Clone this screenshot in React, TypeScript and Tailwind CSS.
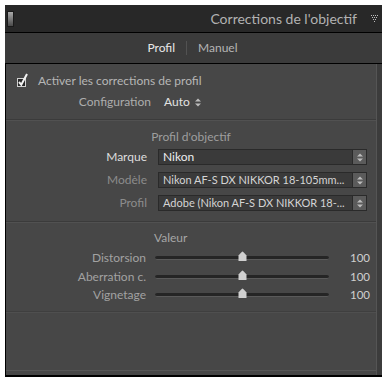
import React from "react";

const font = { fontFamily: 'Lato, "Liberation Sans", sans-serif' };

function Stepper({ className = "" }: { className?: string }) {
  return (
    <svg width="6" height="9" viewBox="0 0 6 9" className={className}>
      <path d="M0 3.5 L3 0.5 L6 3.5 Z" fill="currentColor" />
      <path d="M0 5.5 L3 8.5 L6 5.5 Z" fill="currentColor" />
    </svg>
  );
}

function Select({ value, bright }: { value: string; bright?: boolean }) {
  return (
    <div className="flex h-[16px] w-[209px] border border-[#2a2a2a] bg-[#3a3a3a]">
      <div
        className={`flex-1 whitespace-nowrap pl-[4px] leading-[14px] ${bright ? "text-[12px] text-[#ededed]" : "text-[11px] text-[#d4d4d4]"}`}
      >
        {value}
      </div>
      <div className="flex w-[14px] items-center justify-center border-l border-[#2a2a2a] bg-[#5b5b5b] text-[#bcbcbc]">
        <Stepper />
      </div>
    </div>
  );
}

function SelectRow({ label, value, bright }: { label: string; value: string; bright?: boolean }) {
  return (
    <div className="flex h-[16px] items-center">
      <div
        className={`w-[141px] text-right text-[12px] leading-[16px] ${bright ? "text-[#dedede]" : "text-[#8c8c8c]"}`}
      >
        {label}
      </div>
      <div className="ml-[11px]">
        <Select value={value} bright={bright} />
      </div>
    </div>
  );
}

function Slider({ label }: { label: string }) {
  return (
    <div className="flex h-[18.5px] items-center">
      <div className="w-[140px] text-right text-[12px] leading-[14px] text-[#a2a2a2]">{label}</div>
      <div className="relative ml-[9px] h-[4px] w-[174px] rounded-full border-b border-[#5a5a5a] bg-[#252525]">
        <svg width="9" height="10" viewBox="0 0 9 10" className="absolute left-[83px] top-[-5px]">
          <path d="M4.5 0.5 Q5 0.5 8.5 4.5 L8.5 10 L0.5 10 L0.5 4.5 Q4 0.5 4.5 0.5 Z" fill="#d0d0d0" />
        </svg>
      </div>
      <div className="ml-[21px] text-[11.5px] leading-[14px] text-[#cfcfcf]">100</div>
    </div>
  );
}

function Divider() {
  return <div className="border-t border-[#3b3b3b] shadow-[0_1px_0_#515151]" />;
}

export default function App() {
  return (
    <div className="h-[379px] w-[386px] bg-white pb-[2px] pl-[5px] pr-[4px] pt-[5px]" style={font}>
      <div className="flex h-full flex-col">
        <div className="flex h-[28px] items-center border-b border-black bg-[#282828]">
          <div className="ml-[2px] h-[16px] w-[7px] border border-[#1a1a1a] bg-gradient-to-b from-[#aaaaaa] via-[#7a7a7a] to-[#4a4a4a]" />
          <div className="flex-1 pr-[14px] text-right text-[14px] leading-[18px] text-[#b2b2b2]">
            Corrections de l'objectif
          </div>
          <svg width="7" height="7" viewBox="0 0 7 7" className="mr-[4px]">
            {[
              [0, 0], [2, 0], [4, 0], [6, 0],
              [1, 2], [3, 2], [5, 2],
              [2, 4], [4, 4],
              [3, 6],
            ].map(([x, y], i) => (
              <rect key={i} x={x} y={y} width="1" height="1" fill="#bdbdbd" />
            ))}
          </svg>
        </div>
        <div className="flex h-[31px] items-center justify-center border-b border-black bg-[#3b3b3b] pr-[2px] text-[12px]">
          <span className="text-[#e8e8e8]">Profil</span>
          <span className="mx-[11px] h-[14px] w-px bg-[#525252]" />
          <span className="text-[#b5b5b5]">Manuel</span>
        </div>
        <div className="flex flex-1">
          <div className="flex flex-1 flex-col border-l border-black border-r border-r-[#555] bg-[#474747]">
            <div className="mt-[10px] flex h-[14px] items-center pl-[11px]">
              <svg width="11" height="14" viewBox="0 0 11 14" className="mt-[-2px]">
                <rect x="0.5" y="5.5" width="8" height="8" fill="#262626" stroke="#cfcfcf" />
                <path d="M2 9 L4.3 11.8 L10 1" fill="none" stroke="#f2f2f2" strokeWidth="2" />
              </svg>
              <span className="ml-[10px] text-[12px] leading-[14px] text-[#b6b6b6]">
                Activer les corrections de profil
              </span>
            </div>
            <div className="mt-[7px] flex h-[14px] items-center">
              <div className="w-[145px] text-right text-[12px] leading-[14px] text-[#adadad]">Configuration</div>
              <span className="ml-[13px] text-[12px] leading-[14px] text-[#e2e2e2]">Auto</span>
              <Stepper className="ml-[5px] text-[#bdbdbd]" />
            </div>
            <div className="mt-[10px]">
              <Divider />
            </div>
            <div className="mt-[10px] h-[14px] text-center text-[12px] leading-[14px] text-[#9e9e9e]">
              Profil d'objectif
            </div>
            <div className="mt-[5px] flex flex-col gap-[7px]">
              <SelectRow label="Marque" value="Nikon" bright />
              <SelectRow label="Modèle" value="Nikon AF-S DX NIKKOR 18-105mm..." />
              <SelectRow label="Profil" value="Adobe (Nikon AF-S DX NIKKOR 18-..." />
            </div>
            <div className="mt-[10px]">
              <Divider />
            </div>
            <div className="ml-[148px] mt-[9px] h-[14px] text-[12px] leading-[14px] text-[#a6a6a6]">Valeur</div>
            <div className="mt-[4px] flex flex-col">
              <Slider label="Distorsion" />
              <Slider label="Aberration c." />
              <Slider label="Vignetage" />
            </div>
            <div className="mt-[6px] border-t border-[#3f3f3f] shadow-[0_1px_0_#4f4f4f]" />
            <div className="flex-1" />
            <div className="mb-[4px] border-t border-[#565656]" />
          </div>
          <div className="w-[5px] bg-[#3c3c3c]" />
        </div>
        <div className="h-[2px] bg-black" />
      </div>
    </div>
  );
}
